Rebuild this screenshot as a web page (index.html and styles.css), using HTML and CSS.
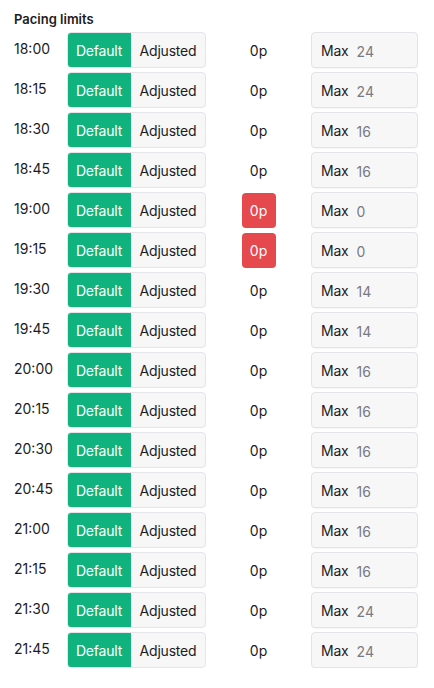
FILE: index.html
```html
<!DOCTYPE html>
<html>
<head>
<meta charset="utf-8">
<link rel="stylesheet" href="styles.css">
</head>
<body>
<div class="panel">
  <h2 class="title">Pacing limits</h2>
  <div class="rows">
    <div class="row"><span class="time">18:00</span><div class="seg"><span class="opt on">Default</span><span class="opt">Adjusted</span></div><div class="cnt"><span class="p">0p</span></div><div class="max"><span class="lbl">Max</span><span class="val">24</span></div></div>
    <div class="row"><span class="time">18:15</span><div class="seg"><span class="opt on">Default</span><span class="opt">Adjusted</span></div><div class="cnt"><span class="p">0p</span></div><div class="max"><span class="lbl">Max</span><span class="val">24</span></div></div>
    <div class="row"><span class="time">18:30</span><div class="seg"><span class="opt on">Default</span><span class="opt">Adjusted</span></div><div class="cnt"><span class="p">0p</span></div><div class="max"><span class="lbl">Max</span><span class="val">16</span></div></div>
    <div class="row"><span class="time">18:45</span><div class="seg"><span class="opt on">Default</span><span class="opt">Adjusted</span></div><div class="cnt"><span class="p">0p</span></div><div class="max"><span class="lbl">Max</span><span class="val">16</span></div></div>
    <div class="row"><span class="time">19:00</span><div class="seg"><span class="opt on">Default</span><span class="opt">Adjusted</span></div><div class="cnt"><span class="p alert">0p</span></div><div class="max"><span class="lbl">Max</span><span class="val">0</span></div></div>
    <div class="row"><span class="time">19:15</span><div class="seg"><span class="opt on">Default</span><span class="opt">Adjusted</span></div><div class="cnt"><span class="p alert">0p</span></div><div class="max"><span class="lbl">Max</span><span class="val">0</span></div></div>
    <div class="row"><span class="time">19:30</span><div class="seg"><span class="opt on">Default</span><span class="opt">Adjusted</span></div><div class="cnt"><span class="p">0p</span></div><div class="max"><span class="lbl">Max</span><span class="val">14</span></div></div>
    <div class="row"><span class="time">19:45</span><div class="seg"><span class="opt on">Default</span><span class="opt">Adjusted</span></div><div class="cnt"><span class="p">0p</span></div><div class="max"><span class="lbl">Max</span><span class="val">14</span></div></div>
    <div class="row"><span class="time">20:00</span><div class="seg"><span class="opt on">Default</span><span class="opt">Adjusted</span></div><div class="cnt"><span class="p">0p</span></div><div class="max"><span class="lbl">Max</span><span class="val">16</span></div></div>
    <div class="row"><span class="time">20:15</span><div class="seg"><span class="opt on">Default</span><span class="opt">Adjusted</span></div><div class="cnt"><span class="p">0p</span></div><div class="max"><span class="lbl">Max</span><span class="val">16</span></div></div>
    <div class="row"><span class="time">20:30</span><div class="seg"><span class="opt on">Default</span><span class="opt">Adjusted</span></div><div class="cnt"><span class="p">0p</span></div><div class="max"><span class="lbl">Max</span><span class="val">16</span></div></div>
    <div class="row"><span class="time">20:45</span><div class="seg"><span class="opt on">Default</span><span class="opt">Adjusted</span></div><div class="cnt"><span class="p">0p</span></div><div class="max"><span class="lbl">Max</span><span class="val">16</span></div></div>
    <div class="row"><span class="time">21:00</span><div class="seg"><span class="opt on">Default</span><span class="opt">Adjusted</span></div><div class="cnt"><span class="p">0p</span></div><div class="max"><span class="lbl">Max</span><span class="val">16</span></div></div>
    <div class="row"><span class="time">21:15</span><div class="seg"><span class="opt on">Default</span><span class="opt">Adjusted</span></div><div class="cnt"><span class="p">0p</span></div><div class="max"><span class="lbl">Max</span><span class="val">16</span></div></div>
    <div class="row"><span class="time">21:30</span><div class="seg"><span class="opt on">Default</span><span class="opt">Adjusted</span></div><div class="cnt"><span class="p">0p</span></div><div class="max"><span class="lbl">Max</span><span class="val">24</span></div></div>
    <div class="row"><span class="time">21:45</span><div class="seg"><span class="opt on">Default</span><span class="opt">Adjusted</span></div><div class="cnt"><span class="p">0p</span></div><div class="max"><span class="lbl">Max</span><span class="val">24</span></div></div>
  </div>
</div>
</body>
</html>
```
FILE: styles.css
```css
html, body {
  margin: 0;
  padding: 0;
  background: #ffffff;
}
body {
  font-family: Inter, "Noto Sans", sans-serif;
  color: #1c1c1e;
  font-size: 14px;
}
.panel {
  padding: 10px 16px 0 14px;
}
.title {
  margin: 0;
  font-size: 13px;
  font-weight: 600;
  line-height: 18px;
  height: 22px;
}
.rows {
  display: flex;
  flex-direction: column;
  gap: 4px;
}
.row {
  display: grid;
  grid-template-columns: 53px 139px 105px 107px;
  align-items: center;
  height: 36px;
}
.time {
  font-size: 14px;
  line-height: 20px;
  margin-top: -2px;
}
.seg {
  display: flex;
  height: 36px;
  box-sizing: border-box;
  border: 1px solid #e6e6ea;
  border-radius: 4px;
  overflow: hidden;
  background: #f7f7f8;
}
.opt {
  display: flex;
  align-items: center;
  justify-content: center;
  width: 74px;
  font-size: 14px;
  letter-spacing: -0.2px;
  color: #1c1c1e;
}
.opt.on {
  width: 64px;
  margin: -1px 0 -1px -1px;
  background: #10b27d;
  color: #ffffff;
}
.cnt {
  display: flex;
  justify-content: center;
}
.p {
  display: flex;
  align-items: center;
  justify-content: center;
  width: 34px;
  height: 35px;
  font-size: 14px;
  border-radius: 4px;
}
.p.alert {
  background: #e5484d;
  color: #ffffff;
}
.max {
  display: flex;
  align-items: center;
  gap: 8px;
  height: 36px;
  box-sizing: border-box;
  padding-left: 9px;
  border: 1px solid #e4e4e8;
  border-radius: 4px;
  background: #f7f7f8;
  box-shadow: 0 1px 1px rgba(0,0,0,0.04);
}
.lbl {
  font-size: 14px;
  letter-spacing: -0.2px;
  color: #1c1c1e;
}
.val {
  font-size: 14px;
  color: #7a7a80;
  margin-top: 2px;
}
```
